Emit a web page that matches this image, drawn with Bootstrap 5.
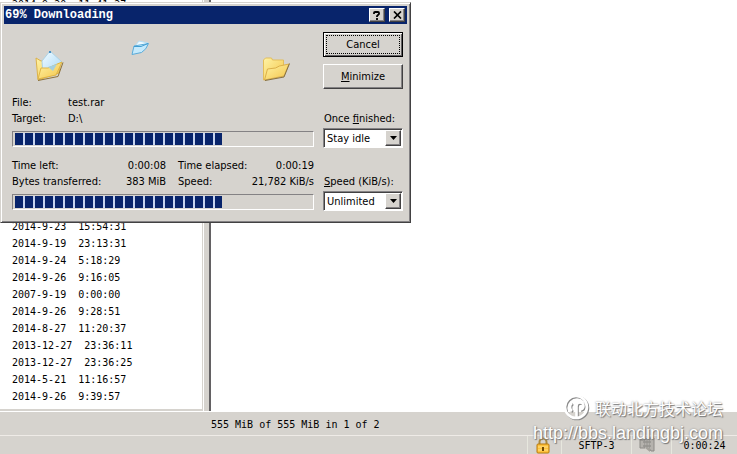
<!DOCTYPE html>
<html lang="en">
<head>
<meta charset="utf-8">
<meta name="viewport" content="width=device-width, initial-scale=1">
<title>69% Downloading</title>
<link rel="stylesheet" href="https://cdn.jsdelivr.net/npm/bootstrap@5.3.0/dist/css/bootstrap.min.css">
<style>
:root { --face: #d6d3ce; --navy: #08246b; --ui: "DejaVu Sans Condensed", "Liberation Sans", sans-serif; }
body { background: var(--face); color: #000; font: 10px/17px "DejaVu Sans Mono", "Liberation Mono", monospace; }
.files { background: #fff; width: 203px; border-right: 1px solid var(--face); border-bottom: 1px solid var(--face); padding: 0 12px; margin-bottom: 1px; }
.file-row { white-space: pre; height: 17px; }
.first-row { height: 5px; line-height: 10px; overflow: hidden; }
.last-rows { padding-bottom: 4px; }
.splitter { width: 6px; border-left: 1px solid #fff; }
.remote { background: #fff; border-left: 2px solid #636163; }
.summary { height: 25px; line-height: 26px; padding-left: 211px; border-top: 1px solid #fff; border-bottom: 1px solid #efebe7; white-space: pre; }
.cell { height: 18px; line-height: 20px; border-left: 1px solid #e7e7de; }
.c-lock { width: 34px; padding-right: 4px; }
.c-proto { width: 70px; }
.c-zip { width: 40px; padding-right: 8px; }
.c-time { width: 66px; }
.dialog-win { left: 0; top: 2px; width: 411px; background: var(--face); border: 1px solid; border-color: #d6d3ce #424142 #424142 #d6d3ce; box-shadow: inset 1px 1px #fff, inset -1px -1px #848284; padding: 3px; font: 11px/16px var(--ui); }
.title-line { background: var(--navy); color: #fff; height: 18px; padding: 0 2px 0 1px; font: bold 12px/18px "Liberation Mono", monospace; }
.tbtn { width: 16px; height: 14px; background: var(--face); border: 1px solid; border-color: #fff #424142 #424142 #fff; box-shadow: inset -1px -1px #848284; }
.content { padding: 0 4px 8px 8px; }
.panel-left { width: 302px; }
.panel-right { width: 80px; padding-top: 8px; }
.art { height: 71px; width: 302px; }
.w-key { width: 56px; }
.stats { margin-top: 11px; }
.w-stat { width: 154px; }
.meter { height: 16px; border: 1px solid; border-color: #848284 #fff #fff #848284; padding: 1px 2px; border-radius: 0; background: var(--face); margin-top: 4px; }
.meter-fill { background: repeating-linear-gradient(90deg, var(--navy) 0 8px, #c6d3ef 8px 10px); }
.push { height: 25px; width: 100%; padding: 0; background: var(--face); color: #000; border: 1px solid; border-color: #fff #424142 #424142 #fff; box-shadow: inset -1px -1px #848284; }
.push-main { border-color: #000; box-shadow: inset 1px 1px #fff, inset -1px -1px #636163; padding: 2px; margin-bottom: 7px; }
.push-main span { display: block; border: 1px dotted #000; height: 19px; line-height: 17px; }
.lbl { display: block; white-space: nowrap; margin-left: 1px; margin-bottom: 1px; }
.lbl-once { margin-top: 22px; }
.lbl-speed { margin-top: 26px; }
.pick { height: 20px; width: 100%; padding: 2px 18px 0 3px; border: 1px solid; border-color: #848284 #fff #fff #848284; box-shadow: inset 1px 1px #424142; border-radius: 0; color: #000; background: #fff; appearance: none; display: block; }
.pick-arrow { right: 2px; top: 2px; width: 16px; height: 16px; background: var(--face); border: 1px solid; border-color: #fff #424142 #424142 #fff; box-shadow: inset -1px -1px #848284; pointer-events: none; }
.watermark { right: 14px; bottom: 10px; color: #fff; text-shadow: 1px 1px 1px #777, 0 0 2px #888; pointer-events: none; }
.wm-name { font: 16px/24px "Noto Sans CJK SC", sans-serif; }
.wm-url { font: 18px/22px "Liberation Sans", sans-serif; }
</style>
</head>
<body>
<div class="d-flex flex-column vh-100 overflow-hidden position-relative">
  <main class="d-flex flex-fill overflow-hidden">
    <section class="files d-flex flex-column justify-content-between overflow-hidden flex-shrink-0">
      <div class="file-row first-row">2014-9-20  11:41:27</div>
      <div class="last-rows">
        <div class="file-row">2014-9-23  15:54:31</div>
        <div class="file-row">2014-9-19  23:13:31</div>
        <div class="file-row">2014-9-24  5:18:29</div>
        <div class="file-row">2014-9-26  9:16:05</div>
        <div class="file-row">2007-9-19  0:00:00</div>
        <div class="file-row">2014-9-26  9:28:51</div>
        <div class="file-row">2014-8-27  11:20:37</div>
        <div class="file-row">2013-12-27  23:36:11</div>
        <div class="file-row">2013-12-27  23:36:25</div>
        <div class="file-row">2014-5-21  11:16:57</div>
        <div class="file-row">2014-9-26  9:39:57</div>
      </div>
    </section>
    <div class="splitter flex-shrink-0"></div>
    <section class="remote flex-fill"></section>
  </main>
  <div class="summary flex-shrink-0">555 MiB of 555 MiB in 1 of 2</div>
  <footer class="d-flex justify-content-end flex-shrink-0">
    <div class="cell c-lock d-flex align-items-center justify-content-center">
      <svg width="14" height="17" viewBox="0 0 14 17"><path d="M3.500 8V5a3.500 3.500 0 0 1 7 0V8" fill="none" stroke="#a98942" stroke-width="2"/><rect x="1" y="7" width="12" height="9" rx="1" fill="#ffc33c" stroke="#b8780c"/><path d="M2 10h10M2 13h10" stroke="#ffe08a"/><path d="M7 10v4" stroke="#704800" stroke-width="2"/></svg>
    </div>
    <div class="cell c-proto text-center">SFTP-3</div>
    <div class="cell c-zip d-flex align-items-center justify-content-center">
      <svg width="17" height="16" viewBox="0 0 17 16"><path d="M1 3h5v8H1zM10 1h5v13h-3l-2-3z" fill="#b5b2ad" stroke="#8c8a86"/><path d="M4 2h8M4 5h8M4 9h8M8 1v10" stroke="#94928e" stroke-width="1.500"/><path d="M6 11h5v4z" fill="#a5a29c"/></svg>
    </div>
    <div class="cell c-time text-center">0:00:24</div>
  </footer>

  <div class="watermark position-absolute">
    <div class="wm-name d-flex align-items-center justify-content-end gap-1">
      <svg width="28" height="28" viewBox="0 0 28 28"><g fill="none" stroke="#8a8a8a" stroke-width="2.600" transform="translate(1 1)"><circle cx="13" cy="13" r="11"/><path d="M13.500 23V12a3.500 3.500 0 1 1 3.500 3.500M9 17a5 5 0 0 1 0-8"/></g><g fill="none" stroke="#fff" stroke-width="2.600"><circle cx="13" cy="13" r="11"/><path d="M13.500 23V12a3.500 3.500 0 1 1 3.500 3.500M9 17a5 5 0 0 1 0-8"/></g></svg>
      <span>联动北方技术论坛</span>
    </div>
    <div class="wm-url">http://bbs.landingbj.com</div>
  </div>

  <div class="dialog-win position-absolute" role="dialog" aria-labelledby="dlgTitle">
    <div class="title-line d-flex align-items-center">
      <span id="dlgTitle" class="flex-fill">69% Downloading</span>
      <button type="button" class="tbtn p-0 d-flex align-items-center justify-content-center me-1" aria-label="Help"><svg width="8" height="9" viewBox="0 0 8 9"><path d="M1 3V2q0-1 1-1h3q1 0 1 1v1L4 5v1M4 7v2" fill="none" stroke="#000" stroke-width="1.800"/></svg></button>
      <button type="button" class="tbtn p-0 d-flex align-items-center justify-content-center" aria-label="Close"><svg width="9" height="8" viewBox="0 0 9 8"><path d="M1 .5l7 7M8 .5l-7 7" stroke="#000" stroke-width="1.700"/></svg></button>
    </div>
    <div class="content d-flex justify-content-between">
      <div class="panel-left">
        <svg class="art d-block" viewBox="12 24 302 71">
          <defs>
            <linearGradient id="gold" x1="0" y1="0" x2="1" y2="1"><stop offset="0" stop-color="#fff3a5"/><stop offset="1" stop-color="#f3c54a"/></linearGradient>
            <linearGradient id="sky" x1="0" y1="0" x2="1" y2="1"><stop offset="0" stop-color="#f4fcff"/><stop offset="1" stop-color="#a5d7f7"/></linearGradient>
          </defs>
          <path d="M36 58l5 3 20 0-2 12-21 7z" fill="url(#gold)" stroke="#dcb24a"/>
          <path d="M42 61l8-10 12 11-5 9-14 3z" fill="url(#sky)" stroke="#add3e6"/>
          <path d="M49 52h2" stroke="#4a92c6" stroke-width="2"/>
          <path d="M38 79l3-11 7 0 14-6-6 13z" fill="url(#gold)" stroke="#e0b545"/>
          <path d="M38 80.500l20-4 5-14" fill="none" stroke="#8c7139"/>
          <path d="M48 67l9-3-4 7z" fill="#a5cfde"/>
          <path d="M135 46l4-5 9 2-4 5z" fill="#eefaff" stroke="#b5def5"/>
          <path d="M132 54.500l2-8.500 14.500-2.500q-2 6-7 9z" fill="#c6eafc" stroke="#5aabd9"/>
          <path d="M134 46.500h7l7-3" fill="none" stroke="#429ed2"/>
          <path d="M263.500 80v-20l2-2 6 0 1 2h11v5l-4 10z" fill="url(#gold)" stroke="#e3bd5a"/>
          <path d="M264.500 80l3-11 8-1 4-2 9.500-2-5 12z" fill="url(#gold)" stroke="#dcb04a"/>
          <path d="M265 80.500l19-3.500 5.500-13.500" fill="none" stroke="#857041"/>
        </svg>
        <div class="d-flex"><span class="w-key">File:</span><span>test.rar</span></div>
        <div class="d-flex"><span class="w-key">Target:</span><span>D:\</span></div>
        <div class="meter d-flex" role="progressbar" aria-label="File progress" aria-valuenow="70" aria-valuemin="0" aria-valuemax="100"><div class="meter-fill" style="width:70%"></div></div>
        <div class="stats d-flex justify-content-between">
          <div class="w-stat">
            <div class="d-flex justify-content-between"><span>Time left:</span><span>0:00:08</span></div>
            <div class="d-flex justify-content-between"><span>Bytes transferred:</span><span>383 MiB</span></div>
          </div>
          <div class="flex-fill ps-2 ms-1">
            <div class="d-flex justify-content-between"><span>Time elapsed:</span><span>0:00:19</span></div>
            <div class="d-flex justify-content-between"><span>Speed:</span><span>21,782 KiB/s</span></div>
          </div>
        </div>
        <div class="meter d-flex" role="progressbar" aria-label="Total progress" aria-valuenow="70" aria-valuemin="0" aria-valuemax="100"><div class="meter-fill" style="width:70%"></div></div>
      </div>
      <div class="panel-right">
        <button type="button" class="push push-main"><span>Cancel</span></button>
        <button type="button" class="push"><u>M</u>inimize</button>
        <label class="lbl lbl-once" for="once">Once <u>f</u>inished:</label>
        <div class="position-relative">
          <select id="once" class="pick"><option>Stay idle</option></select>
          <span class="pick-arrow position-absolute d-flex align-items-center justify-content-center"><svg width="7" height="4" viewBox="0 0 7 4"><path d="M0 0h7L3.500 4z"/></svg></span>
        </div>
        <label class="lbl lbl-speed" for="limit"><u>S</u>peed (KiB/s):</label>
        <div class="position-relative">
          <select id="limit" class="pick"><option>Unlimited</option></select>
          <span class="pick-arrow position-absolute d-flex align-items-center justify-content-center"><svg width="7" height="4" viewBox="0 0 7 4"><path d="M0 0h7L3.500 4z"/></svg></span>
        </div>
      </div>
    </div>
  </div>
</div>
<script src="https://cdn.jsdelivr.net/npm/bootstrap@5.3.0/dist/js/bootstrap.bundle.min.js"></script>
</body>
</html>
